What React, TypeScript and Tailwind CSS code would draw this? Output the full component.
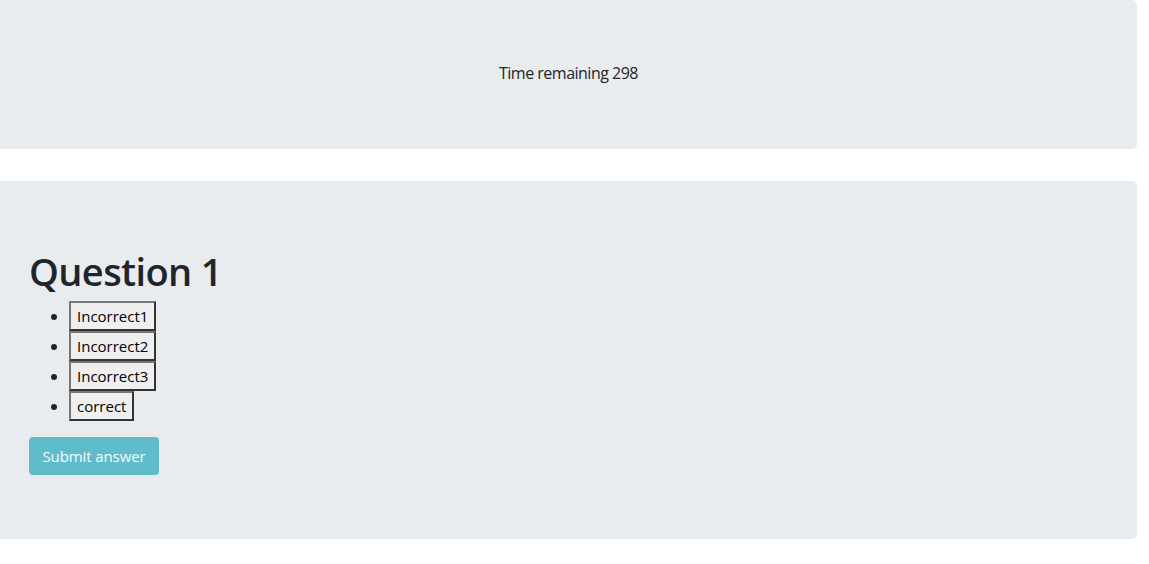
export default function App() {
  const opts = ["Incorrect1", "Incorrect2", "Incorrect3", "correct"];
  return (
    <div className="w-[1149px] bg-white text-[#212529] text-[16px] leading-[1.5]" style={{ fontFamily: '"Open Sans", "Noto Sans", sans-serif' }}>
      <div className="w-[1137px] h-[149px] bg-[#e9ecef] rounded-r-[5px] flex items-center justify-center mb-[32px]">
        <p className="text-[16px] leading-[20px] pb-[3px] tracking-[-0.5px]">Time remaining 298</p>
      </div>
      <div className="w-[1137px] h-[358px] bg-[#e9ecef] rounded-r-[5px] pt-[64px] pl-[29px]">
        <h1 className="text-[38px] leading-[48px] pt-[2px] h-[48px] font-semibold mb-[8px] tracking-[-0.6px]">Question 1</h1>
        <ul className="list-disc pl-[40px] mb-[16px]">
          {opts.map((o) => (
            <li key={o} className="h-[30px]">
              <button className="h-[30px] px-[6px] bg-[#efefef] border-2 border-t-[#767676] border-l-[#767676] border-r-[#333] border-b-[#333] text-black text-[15px] leading-[24px] tracking-[0px]">
                {o}
              </button>
            </li>
          ))}
        </ul>
        <button className="h-[38px] w-[130px] rounded-[4px] bg-[#60bccb] text-[#f3fbfc] text-[15px] tracking-[-0.1px]">
          Submit answer
        </button>
      </div>
    </div>
  );
}
